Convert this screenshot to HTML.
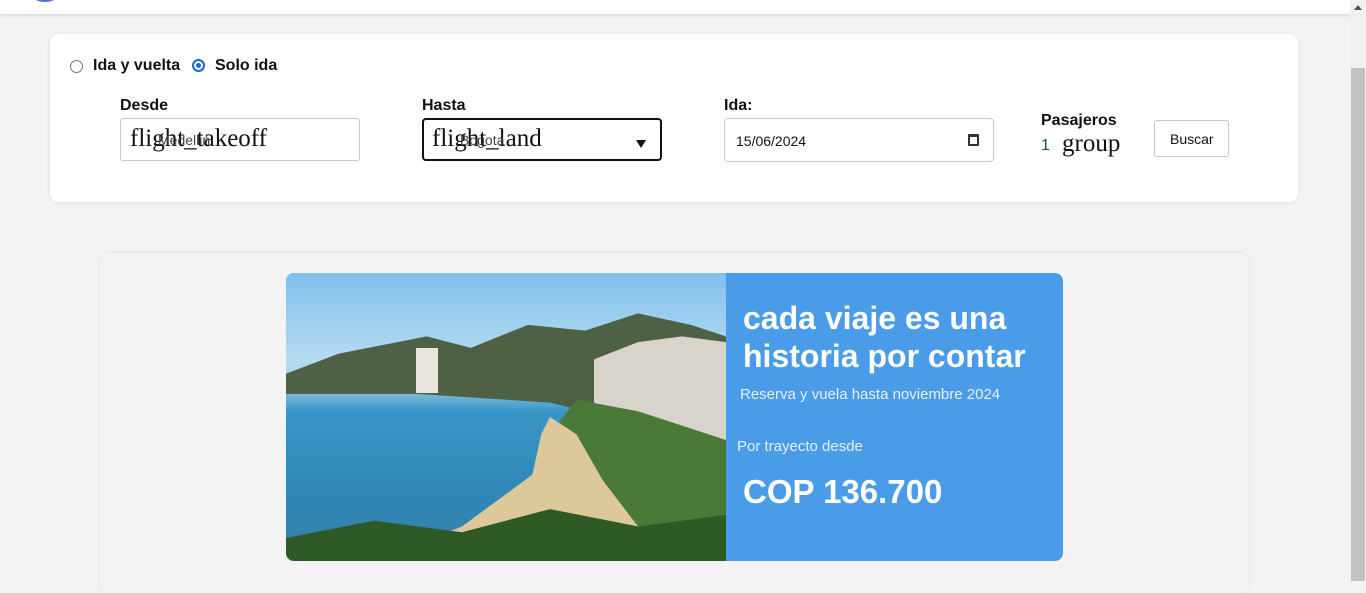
<!DOCTYPE html>
<html><head><meta charset="utf-8"><style>
*{box-sizing:border-box;margin:0;padding:0}
body{width:1366px;height:581px;overflow:hidden;background:#f3f3f3;font-family:"Liberation Sans",Arial,sans-serif;position:relative}
.hdr{position:absolute;left:0;top:0;width:1350px;height:14px;background:#fff;box-shadow:0 1px 4px rgba(0,0,0,.15)}
.logo{position:absolute;left:33px;top:-10px;width:24px;height:12px;border-radius:50%;border-bottom:3px solid #4a6ee0}
.sb{position:absolute;left:1350px;top:0;width:16px;height:581px;background:#f1f1f1}
.sb .th{position:absolute;left:1px;top:68px;width:14px;height:513px;background:#c1c1c1}
.sb .ar{position:absolute;left:4px;top:5px;border-left:4px solid transparent;border-right:4px solid transparent;border-bottom:5px solid #505050}
.card{position:absolute;left:50px;top:34px;width:1248px;height:168px;background:#fff;border-radius:8px;box-shadow:0 1px 4px rgba(0,0,0,.08)}
.t{position:absolute;font-weight:bold;font-size:16px;color:#111}
.radio{position:absolute;width:13px;height:13px;border-radius:50%;border:1px solid #767676;background:#fff}
.radio.on{border:2px solid #1a66d6}
.radio.on::after{content:"";position:absolute;left:2px;top:2px;width:5px;height:5px;border-radius:50%;background:#1a66d6}
.inp{position:absolute;background:#fff;border:1px solid #c8c8c8;border-radius:3px}
.ser{position:absolute;font-family:"Liberation Serif",serif;font-size:25px;color:#111}
.sm{position:absolute;font-size:14px;color:#333}
.card2{position:absolute;left:100px;top:253px;width:1149px;height:340px;background:#f3f3f3;border-radius:8px;box-shadow:0 0 3px rgba(0,0,0,.1)}
.ban{position:absolute;left:286px;top:273px;width:777px;height:288px;border-radius:8px;overflow:hidden;background:#4a9be8}
.w{position:absolute;color:#fff}
.p{position:absolute;left:0;top:0;width:440px;height:288px}
</style></head><body>
<div class="hdr"><div class="logo"></div></div>
<div class="sb"><div class="ar"></div><div class="th"></div></div>
<div class="card">
 <div class="radio" style="left:20px;top:26px"></div>
 <div class="t" style="left:43px;top:23px">Ida y vuelta</div>
 <div class="radio on" style="left:142px;top:25px"></div>
 <div class="t" style="left:165px;top:23px">Solo ida</div>
 <div class="t" style="left:70px;top:63px">Desde</div>
 <div class="inp" style="left:70px;top:84px;width:240px;height:43px"></div>
 <div class="ser" style="left:80px;top:91px">flight_takeoff</div>
 <div class="sm" style="left:108px;top:98px;color:#444">Medellin</div>
 <div class="t" style="left:372px;top:63px">Hasta</div>
 <div class="inp" style="left:372px;top:84px;width:240px;height:43px;border:2px solid #111;border-radius:4px"></div>
 <div class="ser" style="left:382px;top:91px">flight_land</div>
 <div class="sm" style="left:410px;top:98px;color:#444">Bogota</div>
 <div style="position:absolute;left:586px;top:106px;border-left:5px solid transparent;border-right:5px solid transparent;border-top:8px solid #111"></div>
 <div class="t" style="left:674px;top:63px">Ida:</div>
 <div class="inp" style="left:674px;top:84px;width:270px;height:44px;border-radius:4px"></div>
 <div class="sm" style="left:686px;top:99px;color:#111">15/06/2024</div>
 <div style="position:absolute;left:918px;top:100px;width:11px;height:12px;border:2px solid #333;border-top-width:3px;border-radius:1px"></div>
 <div class="t" style="left:991px;top:78px">Pasajeros</div>
 <div class="sm" style="left:991px;top:103px;font-size:16px;color:#1a4a7a">1</div>
 <div class="ser" style="left:1012px;top:96px">group</div>
 <div class="inp" style="left:1104px;top:86px;width:75px;height:37px;border-radius:3px"></div>
 <div class="sm" style="left:1120px;top:97px;color:#111">Buscar</div>
</div>
<div class="card2"></div>
<div class="ban">
 <div class="p" style="background:linear-gradient(180deg,#7fc0ec 0%,#b6dbf0 30%,#a9d0e6 38%,#3796c6 48%,#2f86b6 80%,#3a7fa8 100%)"></div>
 <div class="p" style="background:#4f6145;clip-path:polygon(0 35%,12% 28%,22% 25%,32% 22%,42% 26%,55% 18%,68% 20%,80% 14%,92% 18%,100% 22%,100% 60%,60% 45%,30% 42%,0 42%)"></div>
 <div class="p" style="background:#d8d3cb;clip-path:polygon(70% 30%,80% 24%,90% 22%,100% 24%,100% 70%,78% 55%,70% 45%)"></div>
 <div class="p" style="background:#4b7a38;clip-path:polygon(66% 44%,80% 48%,100% 58%,100% 100%,80% 100%,70% 70%,62% 52%)"></div>
 <div class="p" style="background:#dcc898;clip-path:polygon(60% 50%,66% 56%,72% 72%,80% 88%,88% 100%,20% 100%,40% 88%,56% 70%,58% 56%)"></div>
 <div class="p" style="background:#2f5a25;clip-path:polygon(0 92%,20% 86%,40% 90%,60% 82%,80% 88%,100% 84%,100% 100%,0 100%)"></div>
 <div style="position:absolute;left:130px;top:75px;width:22px;height:45px;background:#e8e4de"></div>
 <div class="w" style="left:457px;top:26px;font-size:32px;font-weight:bold;line-height:38px">cada viaje es una<br>historia por contar</div>
 <div class="w" style="left:454px;top:113px;font-size:15px;color:#e6f0fb">Reserva y vuela hasta noviembre 2024</div>
 <div class="w" style="left:451px;top:165px;font-size:15px;color:#e6f0fb">Por trayecto desde</div>
 <div class="w" style="left:457px;top:200px;font-size:33px;font-weight:bold">COP 136.700</div>
</div>
</body></html>
